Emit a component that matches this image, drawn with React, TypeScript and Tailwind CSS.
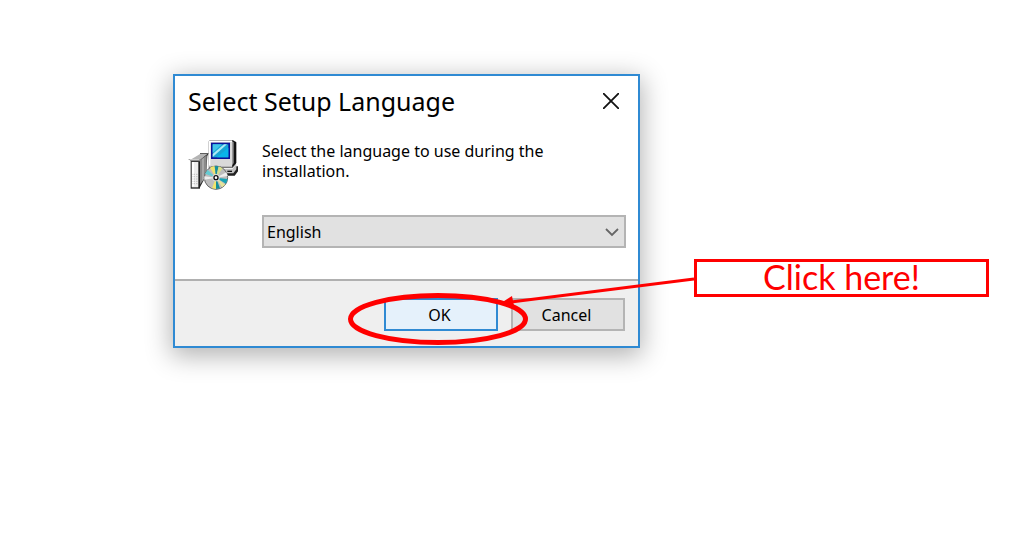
import React from "react";

function InstallerIcon() {
  return (
    <svg className="size-[50px] shrink-0" viewBox="24 30 150 150" aria-hidden="true">
      {/* monitor and its base */}
      <path d="M112 122h46l11-13h5v15l-10 13h-34z" fill="#222" />
      <path d="M112 116h46l11-13v15l-9 12h-40z" fill="#c2c2c2" />
      <path d="M142 122h14v4h-14z" fill="#111" />
      <path d="M89 30h70l9 6v66l-10 12H86V34z" fill="#777" />
      <path d="M157 31l12 6v62l-12 13z" fill="#111" />
      <path d="M155 33l6 4v62l-6 9z" fill="#999" />
      <path d="M87 32h69v78H87z" fill="#d9d9d9" />
      <path d="M87 32h69v4H91v70h-4z" fill="#fff" />
      <path d="M93 38h57v49H93z" fill="#0a129a" />
      <path d="M98 43h47v39H98z" fill="#16a5d5" />
      <path d="M98 43h28L98 68z" fill="#42c4e8" />
      <path d="M132 43h9L98 81v-9z" fill="#a9e9f5" />
      <path d="M145 53v29h-34z" fill="#0ab5ea" />
      {/* box */}
      <path d="M60 70h26l-4 8-4 60-18 34z" fill="#2a2a2a" />
      <path d="M58 92l22-16v62l-22 28z" fill="#8a8a8a" />
      <path d="M66 88l6-5v62l-6 8z" fill="#a8a8a8" />
      <path d="M34 88l26-16h22L60 90z" fill="#b4b4b4" />
      <path d="M32 90h28v86H32z" fill="#222" />
      <path d="M35 96h20v76H35z" fill="#eee" />
      <path d="M36 96h6v73h-6z" fill="#fff" />
      <path d="M24 87h37v7H34z" fill="#8c8c8c" />
      <path d="M28 87h30v3H30z" fill="#ccc" />
      <path
        d="M38 133h17M38 140h17M38 147h17M38 154h17M38 161h17"
        stroke="#888"
        strokeWidth="2"
        strokeDasharray="2 3"
      />
      {/* disc */}
      <circle cx="108" cy="143" r="35" fill="#bdbdbd" stroke="#666" strokeWidth="3" />
      <path d="M108 143L90 113a35 35 0 0 1 14-5z" fill="#eee36d" />
      <path d="M108 143l-4-35a35 35 0 0 1 12 1z" fill="#178f9b" />
      <path d="M108 143l8-34 12 6z" fill="#d6df8a" />
      <path d="M108 143l31-16 4 11z" fill="#eee" />
      <path d="M108 143l35 4-5 14z" fill="#17a4b5" />
      <path d="M108 143l28 21-10 8z" fill="#e6e59a" />
      <path d="M108 143l12 32-12 2z" fill="#168e9a" />
      <path d="M108 143l0 34-12-2z" fill="#f1e46c" />
      <path d="M108 143l-35 6 0-10z" fill="#eee" />
      <path d="M108 143l-33-12 8-12z" fill="#65cbd2" />
      <circle cx="108" cy="143" r="11" fill="#ddd" />
      <circle cx="108" cy="143" r="6" fill="#fff" stroke="#111" strokeWidth="4" />
    </svg>
  );
}

function SetupDialog() {
  return (
    <section
      role="dialog"
      aria-labelledby="dialog-title"
      className="w-[467px] shrink-0 border-2 border-[#2f8ad3] bg-white shadow-[0_6px_24px_2px_rgba(0,0,0,0.3)]"
    >
      <header className="flex h-[50px] items-center justify-between pr-[19px] pl-[13px]">
        <h1 id="dialog-title" className="font-['Noto_Sans',sans-serif] text-[25px] leading-8">
          Select Setup Language
        </h1>
        <button type="button" aria-label="Close">
          <svg className="size-4" viewBox="0 0 16 16" fill="none" stroke="#111" strokeWidth="1.8">
            <path d="M0 0l16 16M16 0L0 16" />
          </svg>
        </button>
      </header>
      <div className="flex gap-6 pt-[14px] pr-3 pb-[31px] pl-[13px]">
        <InstallerIcon />
        <div className="flex-1">
          <label htmlFor="language" className="block pt-px leading-5">
            Select the language to use during the
            <br />
            installation.
          </label>
          <div className="relative mt-[34px]">
            <select
              id="language"
              className="block h-[33px] w-full appearance-none border-2 border-[#b4b4b4] bg-[#e1e1e1] px-[3px]"
            >
              <option>English</option>
            </select>
            <svg
              className="pointer-events-none absolute top-[13px] right-[7px] h-[9px] w-[14px]"
              viewBox="0 0 14 9"
              fill="none"
              stroke="#666"
              strokeWidth="1.8"
              aria-hidden="true"
            >
              <path d="M1 1l6 6 6-6" />
            </svg>
          </div>
        </div>
      </div>
      <footer className="flex justify-end gap-[13px] border-t-2 border-[#b0b0b0] bg-[#efefef] pt-[17px] pr-[13px] pb-[15px]">
        <button type="button" className="h-[33px] w-[114px] border-2 border-[#2f8ad3] bg-[#e5f1fb] pr-[3px]">
          OK
        </button>
        <button type="button" className="h-[33px] w-[114px] border-2 border-[#b4b4b4] bg-[#e1e1e1] pr-[3px]">
          Cancel
        </button>
      </footer>
    </section>
  );
}

export default function App() {
  return (
    <main className="min-h-screen bg-white pt-[74px] pr-[33px] pl-[173px] font-['Noto_Sans',sans-serif] text-[16px] text-black">
      <div className="relative flex items-start gap-[54px]">
        <SetupDialog />
        <p className="mt-[185px] flex h-[38px] flex-1 items-center justify-center border-3 border-[#ff0000] bg-white pb-[2px] font-['Lato',sans-serif] text-[34px] leading-8 whitespace-nowrap text-[#ff0000]">
          Click here!
        </p>
        <svg
          className="pointer-events-none absolute top-0 left-0 h-[274px] w-[521px]"
          viewBox="0 0 521 274"
          fill="none"
          stroke="#ff0000"
          aria-hidden="true"
        >
          <ellipse cx="265" cy="245" rx="87.5" ry="23.5" strokeWidth="5" />
          <path d="M521 205L338 228" strokeWidth="3" />
          <path d="M328 229l11-7 2 10z" fill="#ff0000" stroke="none" />
        </svg>
      </div>
    </main>
  );
}
